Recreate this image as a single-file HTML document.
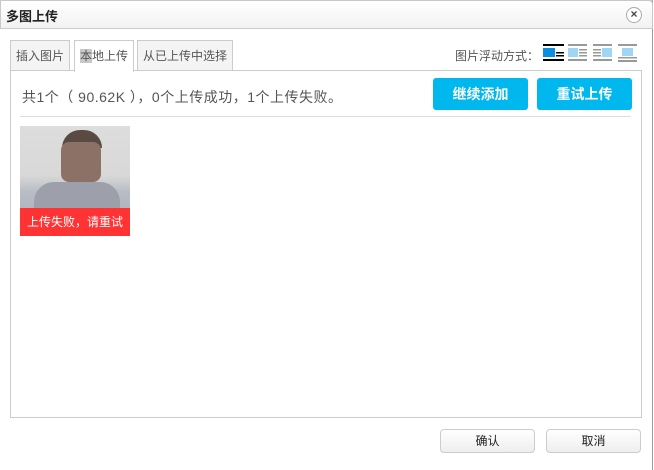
<!DOCTYPE html><html><head><style>
*{margin:0;padding:0;box-sizing:border-box}
body{width:654px;height:470px;background:#fff;font-family:"Liberation Sans","Noto Sans CJK SC",sans-serif;font-size:12px;color:#333;position:relative;overflow:hidden}
.a{position:absolute}
.title{left:0;top:0;width:653px;height:29px;background:linear-gradient(#fff,#f2f2f2);border:1px solid #c8c8c8;border-bottom:1px solid #ccc;border-radius:0 4px 0 0}
.outer{left:0;top:0;width:653px;height:470px;border-right:1px solid #999;border-top:1px solid #ccc}
.tab{top:40px;height:31px;border:1px solid #ccc;border-bottom:none;background:#f4f4f4;line-height:30px;text-align:center;font-size:12px;color:#555}
.box{left:10px;top:70px;width:632px;height:348px;border:1px solid #ccc}
.btn{top:78px;width:95px;height:32px;background:#00b7ee;color:#fff;border-radius:3px;text-align:center;line-height:32px;font-size:14px;font-weight:bold}
.b2{top:429px;width:95px;height:24px;border:1px solid #ccc;border-radius:4px;background:linear-gradient(#fff,#eee);text-align:center;line-height:22px;color:#222}
</style></head><body>
<div class="a outer"></div>
<div class="a title"></div>
<div class="a" style="left:6px;top:6px;font-weight:bold;font-size:13px;color:#222">多图上传</div>
<div class="a" style="left:626px;top:7px;width:16px;height:16px;border:1px solid #aaa;border-radius:50%;background:#fff;text-align:center;line-height:13px;font-size:12px;font-weight:bold;color:#444">×</div>
<div class="a tab" style="left:10px;width:60px">插入图片</div>
<div class="a tab" style="left:74px;width:60px;height:32px;background:#fff;z-index:2"><span style="background:#c8c8c8">本</span>地上传</div>
<div class="a tab" style="left:137px;width:96px">从已上传中选择</div>
<div class="a" style="left:455px;top:47px;color:#555">图片浮动方式：</div>
<svg class="a" style="left:542px;top:43px" width="100" height="20">
<g><rect x="1" y="1" width="21" height="2" fill="#000"/><rect x="1" y="5" width="12" height="9" fill="#0a8ee0"/><rect x="14" y="9" width="8" height="1.5" fill="#000"/><rect x="14" y="12" width="8" height="1.5" fill="#000"/><rect x="1" y="16" width="21" height="2" fill="#000"/></g>
<g fill="#999"><rect x="26" y="1" width="19" height="2"/><rect x="26" y="5" width="10" height="9" fill="#9fd6f5"/><rect x="37" y="6" width="8" height="1.5"/><rect x="37" y="9" width="8" height="1.5"/><rect x="37" y="12" width="8" height="1.5"/><rect x="26" y="16" width="19" height="2"/></g>
<g fill="#999"><rect x="51" y="1" width="19" height="2"/><rect x="60" y="5" width="10" height="9" fill="#9fd6f5"/><rect x="51" y="6" width="8" height="1.5"/><rect x="51" y="9" width="8" height="1.5"/><rect x="51" y="12" width="8" height="1.5"/><rect x="51" y="16" width="19" height="2"/></g>
<g fill="#999"><rect x="76" y="1" width="19" height="2"/><rect x="80" y="5" width="11" height="8" fill="#9fd6f5"/><rect x="76" y="14" width="19" height="1.5"/><rect x="76" y="17" width="19" height="2"/></g>
</svg>
<div class="a box"></div>
<div class="a" style="left:22px;top:87px;font-size:14px;color:#555;letter-spacing:0.5px">共1个（ 90.62K ），0个上传成功，1个上传失败。</div>
<div class="a btn" style="left:433px">继续添加</div>
<div class="a btn" style="left:537px">重试上传</div>
<div class="a" style="left:20px;top:116px;width:611px;height:1px;background:#ddd"></div>
<div class="a" style="left:20px;top:126px;width:110px;height:110px;background:linear-gradient(#ddd 0,#d8d8d8 45%,#b8bcc4 60%,#a8acb4 100%)">
<div class="a" style="left:42px;top:4px;width:40px;height:18px;border-radius:20px 20px 0 0;background:#5a4a44"></div>
<div class="a" style="left:41px;top:16px;width:40px;height:40px;background:#8c7266;border-radius:8px"></div>
<div class="a" style="left:14px;top:56px;width:86px;height:30px;background:#9da0aa;border-radius:20px 20px 0 0"></div>
</div>
<div class="a" style="left:20px;top:208px;width:110px;height:28px;background:#f33;color:#fff;text-align:center;line-height:28px;font-size:12px">上传失败，请重试</div>
<div class="a b2" style="left:440px">确认</div>
<div class="a b2" style="left:546px">取消</div>
</body></html>
